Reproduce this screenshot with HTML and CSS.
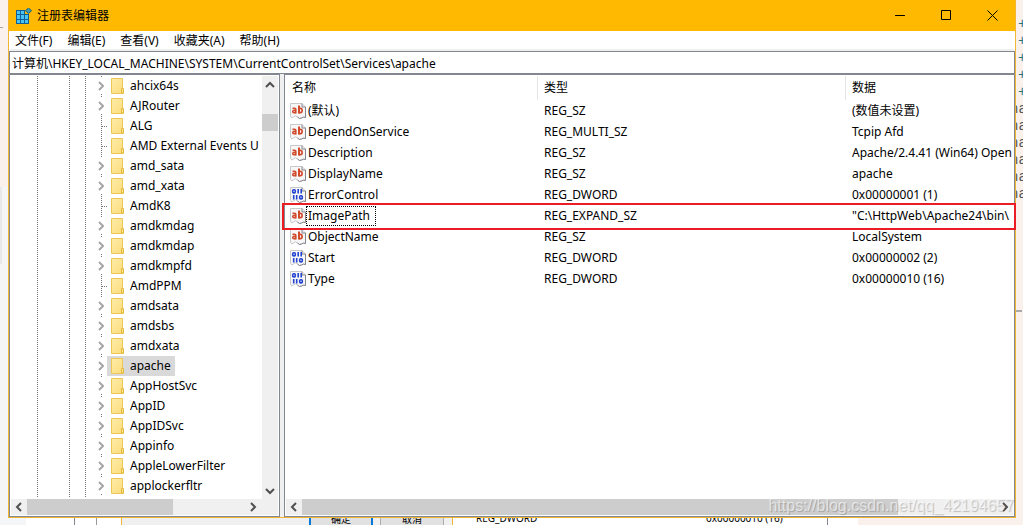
FILE: index.html
```html
<!DOCTYPE html>
<html lang="zh-CN">
<head>
<meta charset="utf-8">
<title>注册表编辑器</title>
<link rel="stylesheet" href="styles.css">
</head>
<body>
<svg class="defs" aria-hidden="true">
  <defs>
    <linearGradient id="fold" x1="0" y1="0" x2="1" y2="1"><stop offset="0" stop-color="#ffeca8"/><stop offset="1" stop-color="#fcdc7c"/></linearGradient>
    <symbol id="folder" viewBox="0 0 14 16"><path d="M.5.5h11v11h1v4H.5z" fill="url(#fold)" stroke="#ecc755"/><path d="M10.500 15v-4.500h2v4.500z" fill="#ffe48c" stroke="#e3b93e"/></symbol>
    <symbol id="chevron" viewBox="0 0 6 10"><path d="M1 1l4 4-4 4" fill="none" stroke="#a6a6a6" stroke-width="2"/></symbol>
    <symbol id="page" viewBox="0 0 16 16"><path d="M.5.5h11.500l3.500 3.500v10.500q-2-1-4 .5t-4-1-4 0-3-1z" fill="#f7f7f8" stroke="#c8c8cc"/><path d="M12 .5v3.500h3.500M15.500 4v10.500q-2-1-4 .5t-4-1" fill="none" stroke="#85858d"/></symbol>
    <symbol id="string" viewBox="0 0 16 16"><use href="#page"/><g fill="none" stroke="#d24a2c"><path d="M2.500 5.300h2q1.200 0 1.200 1V10.500" stroke-width="1.800"/><path d="M5.500 7.500H4q-1.300 0-1.300 1.100t1.300 1.100h1.500" stroke-width="1.500"/><path d="M9 2.500V10.500" stroke-width="2"/><path d="M9 5.300h1.500q1.600 0 1.600 2.200t-1.600 2.200H9" stroke-width="1.700"/></g></symbol>
    <symbol id="binary" viewBox="0 0 16 16"><use href="#page"/><g fill="none" stroke="#2443d0" stroke-width="1.600"><rect x="2.700" y="2.700" width="2.600" height="3.200" rx="1"/><path d="M8.200 2v4.600M11.200 2v4.600M3.700 8v4.600M6.700 8v4.600"/><rect x="9.700" y="8.700" width="2.600" height="3.200" rx="1"/></g></symbol>
    <symbol id="arrow" viewBox="0 0 16 16"><path d="M10 4L6 8l4 4" fill="none" stroke="#505050" stroke-width="2"/></symbol>
  </defs>
</svg>
<div class="desktop">
  <aside class="behind-left"><span class="tick"></span><span class="edge"></span></aside>
  <main class="window">
    <header class="titlebar">
      <svg class="app-icon" viewBox="0 0 16 16"><path d="M0 2h9v4h4v10H0z" fill="#125f96"/><path d="M1 3h3v3H1zM5 3h3v3H5zM1 7h3v4H1zM5 7h3v4H5zM9 7h3v4H9zM1 12h3v3H1zM5 12h3v3H5zM9 12h3v3H9z" fill="#48c5f5"/><path d="M12.500 0L15.500 2.700l-3 2.800-3-2.800z" fill="#3c9ab5" stroke="#175f80"/></svg>
      <h1>注册表编辑器</h1>
      <div class="controls">
        <button aria-label="最小化"><svg viewBox="0 0 11 11"><path d="M0 5.500h10"/></svg></button>
        <button aria-label="最大化"><svg viewBox="0 0 11 11"><path d="M.5.5h9v9h-9z"/></svg></button>
        <button aria-label="关闭"><svg viewBox="0 0 11 11"><path d="M.5.5l10 10M10.500.5l-10 10"/></svg></button>
      </div>
    </header>
    <nav class="menu"><button>文件(F)</button><button>编辑(E)</button><button>查看(V)</button><button>收藏夹(A)</button><button>帮助(H)</button></nav>
    <input class="address" aria-label="地址" value="计算机\HKEY_LOCAL_MACHINE\SYSTEM\CurrentControlSet\Services\apache">
    <div class="panes">
      <section class="pane tree-pane">
        <ul class="tree" id="tree"></ul>
        <div class="vbar"><button aria-label="向上"><svg class="up"><use href="#arrow"/></svg></button><span class="vthumb"></span><button aria-label="向下"><svg class="down"><use href="#arrow"/></svg></button></div>
        <div class="hbar"><button aria-label="向左"><svg><use href="#arrow"/></svg></button><span class="hthumb"></span><button aria-label="向右"><svg class="right"><use href="#arrow"/></svg></button></div>
      </section>
      <section class="pane value-pane">
        <table class="values">
          <colgroup><col class="c-name"><col class="c-type"><col></colgroup>
          <thead><tr><th>名称</th><th>类型</th><th>数据</th></tr></thead>
          <tbody id="values"></tbody>
        </table>
        <div class="hbar wide"><button aria-label="向左"><svg><use href="#arrow"/></svg></button><span class="hthumb"></span><button aria-label="向右"><svg class="right"><use href="#arrow"/></svg></button></div>
        <div class="mark"></div>
        <div class="watermark">https://blog.csdn.net/qq_42194657</div>
      </section>
    </div>
  </main>
  <aside class="behind-right"><span>+</span><span>+</span><span>+</span><span>+</span><span>+</span><span class="na">na</span><span class="na">na</span><span class="na">na</span><span class="na">na</span><span class="na">na</span><span class="na">na</span><i class="dash"></i></aside>
  <footer class="behind-bottom">
    <span class="b-tree"></span>
    <div class="b-dialog"><button class="ok">确定</button><button>取消</button></div>
    <div class="b-values"><span>REG_DWORD</span><span>0x00000010 (16)</span></div>
    <span class="b-gap"></span>
  </footer>
</div>
<script src="app.js"></script>
</body>
</html>
```
FILE: styles.css
```css
*, *::before, *::after { box-sizing: border-box; }
body { margin: 0; font: 12px/20px "Noto Sans", "Noto Sans CJK SC", sans-serif; color: #000; }
button { border: 0; padding: 0; background: none; font: inherit; color: inherit; }
.defs { position: absolute; width: 0; height: 0; }
.desktop { display: grid; grid-template: 1fr 7px / 8px 1fr 7px; height: 100vh; overflow: hidden; background: #faf0ec; }

.behind-left { display: flex; flex-direction: column; background: linear-gradient(#faf0ec 187px, #f5f5f6 187px); }
.tick { width: 3px; height: 1px; margin-top: 27px; background: #a9a4a2; }
.edge { width: 2px; height: 77px; margin-top: 159px; background: #e8e8e8; }

.window { display: flex; flex-direction: column; min-width: 0; min-height: 0; border: 1px solid #f2b632; border-top: 0; background: #f0f0f0; }
.titlebar { display: flex; align-items: center; flex: none; height: 31px; padding-left: 7px; background: #ffb900; }
.app-icon { width: 16px; height: 16px; }
.titlebar h1 { margin: 0 0 0 5px; font-size: 12px; font-weight: 400; }
.controls { display: flex; margin-left: auto; }
.controls button { display: grid; place-items: center; width: 46px; height: 30px; }
.controls svg { width: 11px; height: 11px; fill: none; stroke: #000; }

.menu { display: flex; flex: none; gap: 15px; height: 18px; margin-bottom: 2px; padding-left: 6px; background: #fff; }
.menu button { line-height: 20px; white-space: nowrap; }
.address { flex: none; width: 100%; height: 23px; padding: 0 2px; border: 1px solid #828790; outline: 0; background: #fff; color: #000; font: inherit; }

.panes { display: grid; grid-template-columns: 271px 1fr; gap: 4px; flex: 1; min-height: 0; }
.pane { position: relative; min-width: 0; min-height: 0; border: 1px solid #828790; background: #fff; }
.tree-pane { display: grid; grid-template: 1fr 16px / 1fr 16px; padding: 1px; }
.tree { position: relative; overflow: hidden; min-height: 0; margin: 0; padding: 0; list-style: none; }
.tree::before, .tree::after { content: ""; position: absolute; top: 0; bottom: 2px; left: 26px; width: 33px; border: dotted #777; border-width: 0 1px; }
.tree::after { left: 74px; width: 1px; border-width: 0 0 0 1px; }
.tree li { display: flex; align-items: center; height: 20px; padding-left: 87px; white-space: nowrap; }
.twig { display: flex; align-items: center; align-self: stretch; width: 9px; background: repeating-linear-gradient(#777 0 1px, transparent 1px 2px) 3px 0 / 1px 100% no-repeat; }
.twig svg { width: 6px; height: 16px; background: #fff; }
.leaf::after { content: ""; width: 5px; margin-left: 4px; border-top: 1px dotted #777; }
.key { display: flex; align-items: center; gap: 5px; height: 20px; padding: 0 4px; }
.key svg { width: 14px; height: 16px; }
.selected { background: #d9d9d9; }

.vbar { display: flex; flex-direction: column; background: #f0f0f0; }
.vbar button, .hbar button { flex: none; width: 16px; height: 16px; }
.vbar svg, .hbar svg { display: block; width: 16px; height: 16px; }
.vbar button:first-child { height: 17px; }
.vbar button:last-child { margin-top: auto; }
.up { transform: rotate(90deg); }
.down { transform: rotate(-90deg); }
.right { transform: rotate(180deg); }
.vthumb { height: 17px; margin-top: 21px; background: #cdcdcd; }
.hbar { grid-column: 1 / -1; display: flex; height: 16px; padding-right: 17px; background: #f0f0f0; }
.hbar button:last-child { margin-left: auto; }
.hthumb { width: 146px; background: #cdcdcd; }

.value-pane { display: flex; flex-direction: column; justify-content: space-between; padding: 1px; }
.values { table-layout: fixed; width: 100%; border-collapse: separate; border-spacing: 0; }
.c-name { width: 252px; }
.c-type { width: 308px; }
.values th { height: 24px; padding: 0 0 0 6px; border-right: 1px solid #e5e5e5; font-weight: 400; text-align: left; }
.values th:last-child { border: 0; }
.values td { height: 21px; padding: 0 0 0 6px; overflow: hidden; white-space: nowrap; }
.values td:first-child { padding-left: 4px; }
.value { display: flex; align-items: center; height: 21px; }
.value svg { flex: none; width: 16px; height: 16px; }
.value span { padding: 0 2px; }
.focus span { outline: 1px dotted #000; outline-offset: -1px; padding-right: 6px; }
.wide { padding: 0; }
.wide .hthumb { width: 82%; }
.mark { position: absolute; z-index: 1; top: 128px; left: -3px; right: -2px; height: 27px; border: 2px solid #ec1c24; }
.watermark { position: absolute; right: 0; bottom: 0; font: 16px/20px "Liberation Sans", sans-serif; color: rgba(255,255,255,.6); text-shadow: 1px 1px 1px rgba(0,0,0,.22); }

.behind-right { display: flex; flex-direction: column; overflow: hidden; padding-top: 16px; font: 14px/17px "Liberation Mono", monospace; }
.behind-right span { height: 17px; padding-left: 2px; color: #28737f; }
.behind-right .na { padding: 0; color: #555; text-indent: -6px; }
.dash { width: 6px; height: 2px; margin-top: 107px; background: #aaa; }

.behind-bottom { grid-column: 1 / -1; display: flex; overflow: hidden; font-size: 10px; line-height: 12px; }
.b-tree { width: 122px; border-left: 26px solid #f5f6f8; border-right: 1px solid #f2b632; background: linear-gradient(90deg, #fff 48px, #828790 48px, #828790 49px, #fff 49px, #fff 70px, #999 70px, #999 71px, #fff 71px); }
.b-dialog { display: flex; align-items: flex-end; gap: 7px; width: 331px; padding-left: 187px; border-right: 1px solid #f2b632; background: #f0f0f0; }
.b-dialog button { width: 64px; height: 12px; background: #e1e1e1; border: solid #adadad; border-width: 0 1px; }
.b-dialog .ok { border-color: #0078d7; border-width: 0 2px; }
.b-values { display: flex; align-items: flex-end; width: 375px; padding-left: 23px; border-right: 1px solid #828790; background: #fff; }
.b-values span { width: 230px; height: 12px; flex: none; line-height: 10px; }
.b-gap { width: 30px; background: #fff; }
```
FILE: app.js
```js
const keys = ["+ahcix64s", "+AJRouter", "ALG", "AMD External Events U", "+amd_sata", "+amd_xata", "AmdK8",
  "+amdkmdag", "+amdkmdap", "+amdkmpfd", "AmdPPM", "+amdsata", "+amdsbs", "+amdxata", "+apache",
  "+AppHostSvc", "+AppID", "+AppIDSvc", "+Appinfo", "+AppleLowerFilter", "+applockerfltr"];
document.getElementById("tree").innerHTML = keys.map(k => {
  const name = k.replace("+", "");
  const twig = k[0] === "+" ? '<span class="twig"><svg><use href="#chevron"/></svg></span>' : '<span class="twig leaf"></span>';
  return `<li>${twig}<span class="key${name === "apache" ? " selected" : ""}"><svg><use href="#folder"/></svg>${name}</span></li>`;
}).join("");

const values = [
  ["(默认)", "REG_SZ", "(数值未设置)"],
  ["DependOnService", "REG_MULTI_SZ", "Tcpip Afd"],
  ["Description", "REG_SZ", "Apache/2.4.41 (Win64) Open"],
  ["DisplayName", "REG_SZ", "apache"],
  ["ErrorControl", "REG_DWORD", "0x00000001 (1)"],
  ["ImagePath", "REG_EXPAND_SZ", '"C:\\HttpWeb\\Apache24\\bin\\'],
  ["ObjectName", "REG_SZ", "LocalSystem"],
  ["Start", "REG_DWORD", "0x00000002 (2)"],
  ["Type", "REG_DWORD", "0x00000010 (16)"]];
document.getElementById("values").innerHTML = values.map(([n, t, d]) =>
  `<tr><td><div class="value${n === "ImagePath" ? " focus" : ""}"><svg><use href="#${t === "REG_DWORD" ? "binary" : "string"}"/></svg><span>${n}</span></div></td><td>${t}</td><td>${d}</td></tr>`).join("");
```
